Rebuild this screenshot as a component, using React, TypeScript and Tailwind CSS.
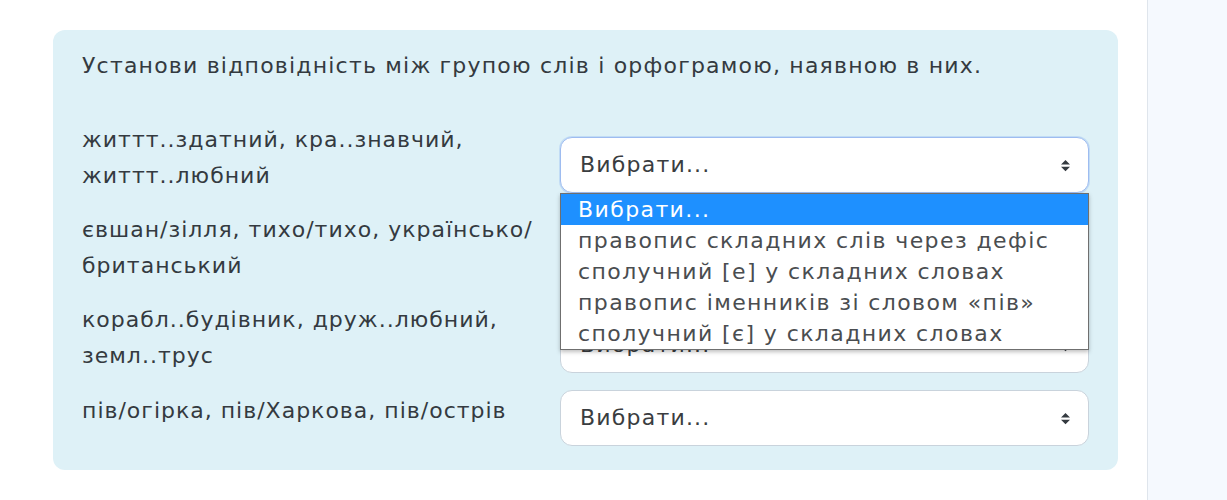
import React from 'react'

const rows = [
  { lines: ['життт..здатний, кра..знавчий,', 'життт..любний'], open: true },
  { lines: ['євшан/зілля, тихо/тихо, українсько/', 'британський'], open: false },
  { lines: ['корабл..будівник, друж..любний,', 'земл..трус'], open: false },
  { lines: ['пів/огірка, пів/Харкова, пів/острів'], open: false },
]

const options = [
  'Вибрати...',
  'правопис складних слів через дефіс',
  'сполучний [е] у складних словах',
  'правопис іменників зі словом «пів»',
  'сполучний [є] у складних словах',
]

function Arrows() {
  return (
    <svg viewBox="0 0 4 5" className="w-[9px] h-[13px]" fill="#343a40">
      <path d="M2 0L0 2h4zm0 5L0 3h4z" />
    </svg>
  )
}

function Select({ open }: { open: boolean }) {
  return (
    <div className="relative">
      <div
        className={`flex items-center justify-between h-[56px] w-[529px] pl-[19px] pr-[18px] bg-white rounded-[12px] border ${
          open ? 'border-[#9ebcf0] shadow-[0_0_0_1px_rgba(140,180,240,0.35)]' : 'border-[#c9d3dc]'
        } text-[#3a3d40]`}
      >
        <span>Вибрати...</span>
        <Arrows />
      </div>
      {open && (
        <div className="absolute left-0 top-[56px] z-10 w-[529px] bg-white border border-[#6f6f6f] shadow-[0_2px_4px_rgba(0,0,0,0.25)] leading-[31px] tracking-[1.4px]">
          {options.map((o, i) => (
            <div
              key={i}
              className={`pl-[17px] h-[31px] whitespace-nowrap ${
                i === 0 ? 'bg-[#1e90ff] text-white' : 'text-[#4a4d50]'
              }`}
            >
              {o}
            </div>
          ))}
        </div>
      )}
    </div>
  )
}

export default function App() {
  return (
    <div
      className="flex w-[1227px] h-[500px] bg-white text-[22px] leading-[36px] text-[#343a40] tracking-[1.2px]"
      style={{ fontFamily: '"DejaVu Sans", "Open Sans", sans-serif' }}
    >
      <main className="flex-1 pl-[53px] pr-[29px] pt-[30px]">
        <div className="bg-[#def1f7] rounded-[12px] pt-[18px] pb-[24px] px-[29px]">
          <p className="mb-[36px] whitespace-nowrap">
            Установи відповідність між групою слів і орфограмою, наявною в них.
          </p>
          <div className="flex flex-col">
            {rows.map((r, i) => (
              <div key={i} className="flex items-center">
                <div className="w-[478px] pt-[2px] pb-[16px] tracking-[1px]">
                  {r.lines.map((l, j) => (
                    <div key={j} className="whitespace-nowrap">
                      {l}
                    </div>
                  ))}
                </div>
                <Select open={r.open} />
              </div>
            ))}
          </div>
        </div>
      </main>
      <aside className="w-[80px] bg-[#f5f9fe] border-l border-[#dfe5ec]" />
    </div>
  )
}
